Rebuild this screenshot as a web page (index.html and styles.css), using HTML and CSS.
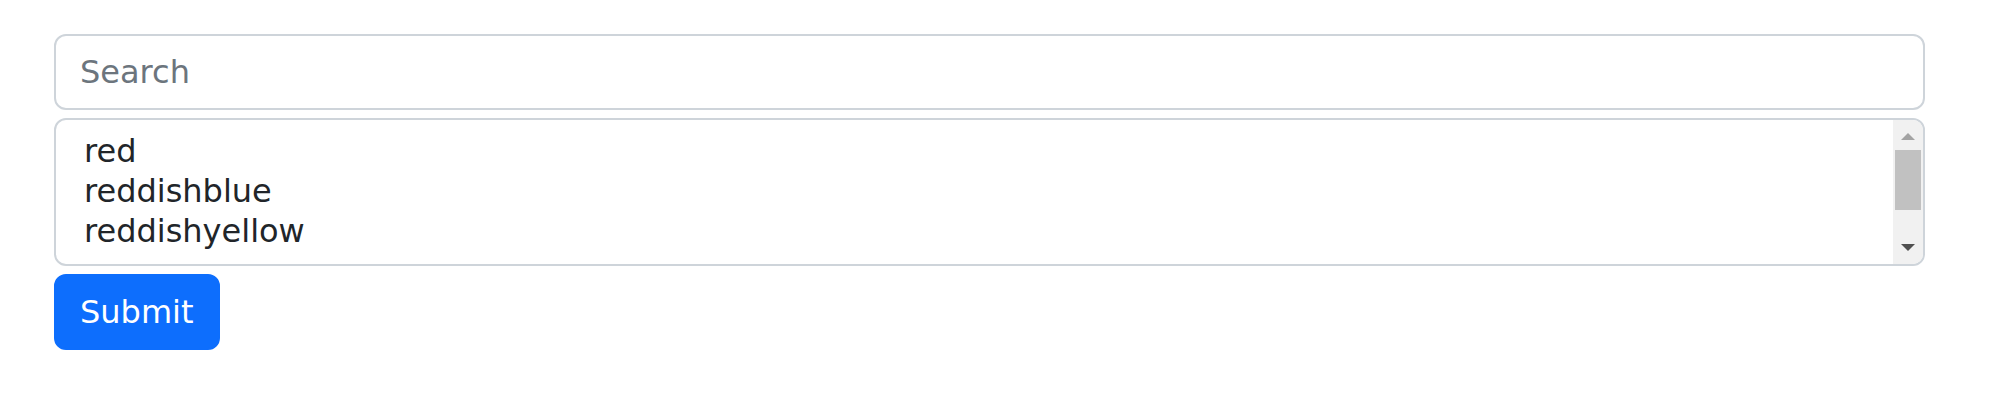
FILE: index.html
```html
<!DOCTYPE html>
<html lang="en">
<head>
<meta charset="utf-8">
<title>Search</title>
<link rel="stylesheet" href="styles.css">
</head>
<body>
<main class="page">
  <form class="form">
    <input class="field" type="text" placeholder="Search">
    <div class="listbox" role="listbox">
      <div class="viewport">
        <ul class="options">
          <li class="option">red</li>
          <li class="option">reddishblue</li>
          <li class="option">reddishyellow</li>
        </ul>
      </div>
      <div class="scrollbar" aria-hidden="true">
        <div class="sb-button sb-up"><span class="arrow-up"></span></div>
        <div class="sb-track"><div class="sb-thumb"></div></div>
        <div class="sb-button sb-down"><span class="arrow-down"></span></div>
      </div>
    </div>
    <button class="btn" type="button">Submit</button>
  </form>
</main>
</body>
</html>
```
FILE: styles.css
```css
html, body {
  margin: 0;
  padding: 0;
  background: #ffffff;
}

body {
  font-family: "DejaVu Sans", "Liberation Sans", sans-serif;
  color: #212529;
}

.page {
  padding: 34px 80px 0 54px;
}

.form {
  display: flex;
  flex-direction: column;
  align-items: flex-start;
}

.field {
  box-sizing: border-box;
  width: 100%;
  height: 76px;
  margin: 0 0 8px 0;
  padding: 12px 24px;
  font-family: inherit;
  font-size: 32px;
  line-height: 48px;
  color: #212529;
  background: #ffffff;
  border: 2px solid #ced4da;
  border-radius: 12px;
  outline: none;
}

.field::placeholder {
  color: #6c757d;
  opacity: 1;
}

.listbox {
  box-sizing: border-box;
  width: 100%;
  height: 148px;
  margin: 0 0 8px 0;
  display: flex;
  border: 2px solid #ced4da;
  border-radius: 12px;
  overflow: hidden;
  background: #ffffff;
}

.viewport {
  flex: 1;
  padding: 12px 24px;
}

.options {
  height: 120px;
  margin: 0;
  padding: 0;
  list-style: none;
  overflow: hidden;
}

.option {
  padding: 0 4px 2px 4px;
  font-size: 32px;
  line-height: 38px;
  color: #212529;
  white-space: nowrap;
}

.scrollbar {
  width: 30px;
  flex: none;
  display: flex;
  flex-direction: column;
  background: #f1f1f1;
}

.sb-button {
  height: 30px;
  flex: none;
  box-sizing: border-box;
  display: flex;
  justify-content: center;
  align-items: flex-start;
}

.sb-up {
  padding-top: 13px;
}

.sb-down {
  padding-top: 10px;
}

.arrow-up {
  width: 0;
  height: 0;
  border-left: 7px solid transparent;
  border-right: 7px solid transparent;
  border-bottom: 7px solid #a3a3a3;
}

.arrow-down {
  width: 0;
  height: 0;
  border-left: 7px solid transparent;
  border-right: 7px solid transparent;
  border-top: 7px solid #505050;
}

.sb-track {
  flex: 1;
}

.sb-thumb {
  height: 60px;
  margin: 0 2px;
  background: #c1c1c1;
}

.btn {
  box-sizing: border-box;
  height: 76px;
  padding: 12px 24px;
  font-family: inherit;
  font-size: 32px;
  line-height: 48px;
  color: #ffffff;
  background: #0d6efd;
  border: 2px solid #0d6efd;
  border-radius: 12px;
  cursor: pointer;
}
```
